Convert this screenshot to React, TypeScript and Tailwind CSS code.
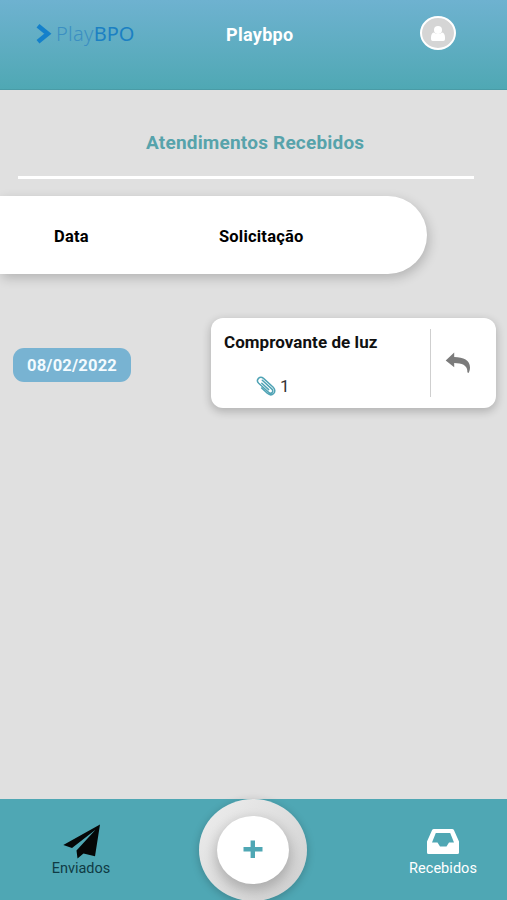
import type { ReactNode } from "react";

function Label({ children, className }: { children: ReactNode; className: string }) {
  return <span className={`block whitespace-nowrap ${className}`}>{children}</span>;
}

function Header() {
  return (
    <header className="flex h-[90px] shrink-0 items-start border-b border-[#4a9ba6] bg-linear-to-b from-[#6eb2d0] to-[#4fa8b4]">
      <div className="ml-9 mt-5 flex h-7 w-[190px] items-center">
        <svg className="mt-[-1px] h-5 w-4" viewBox="0 0 16 20" fill="none">
          <path d="M2 1.8L11.8 9.8 2 17.8" stroke="#1480cb" strokeWidth="4.6" />
        </svg>
        <span className="ml-1 whitespace-nowrap font-['Noto_Sans',sans-serif] text-[20px] leading-7 text-[#1b80c3]">
          <span className="font-light tracking-[0.3px] text-[#3b8fc2]">Play</span>
          <span className="tracking-[-0.1px]">BPO</span>
        </span>
      </div>
      <Label className="mt-[21px] w-[194px] text-[18px] font-bold leading-7 tracking-[0.3px] text-white">Playbpo</Label>
      <div className="mt-4 flex h-[34px] w-9 items-center justify-center rounded-[50%] border-2 border-white bg-[#d5d5d5]">
        <svg className="h-[15px] w-[14px]" viewBox="0 0 14 15" preserveAspectRatio="none" fill="#fff">
          <ellipse cx="7" cy="4" rx="4" ry="3.9" />
          <path d="M2.8 6.4Q7 9.4 11.2 6.4Q14 7.2 14 11.5V13.3Q14 15 12.3 15H1.7Q0 15 0 13.3V11.5Q0 7.2 2.8 6.4Z" />
        </svg>
      </div>
    </header>
  );
}

function RequestCard() {
  return (
    <article className="flex h-[90px] w-[285px] rounded-[12px] bg-white shadow-[0_3px_9px_1px_rgba(0,0,0,0.2)]">
      <div className="w-[219px] pl-[13px] pt-3">
        <Label className="text-[17px] font-bold leading-6 tracking-[0.06px] text-[#111]">Comprovante de luz</Label>
        <div className="ml-8 mt-5 flex items-center">
          <svg className="-mt-px h-5 w-5" viewBox="0 0 20 20" fill="none" stroke="#4fa3b5" strokeWidth="1.5" strokeLinecap="round">
            <path d="M6 4.2L15.4 12.8C18 15.4 15 18.6 12.3 16.2L2.4 7.2C-1 3.8 3.6 -0.9 7.2 2.3L16.9 11.2C21.4 15.7 15.6 21.3 11 17.2L5.3 11.9" transform="translate(.3 .1)" />
            <path d="M5.8 7.3L12.7 13.6" />
          </svg>
          <span className="ml-1 text-[17px] leading-6 text-[#333]">1</span>
        </div>
      </div>
      <div className="mt-[11px] h-[68px] w-px bg-[#cfcfcf]" />
      <svg className="ml-[14px] mt-[34px] h-[22px] w-[26px]" viewBox="0 0 26 22" preserveAspectRatio="none">
        <path d="M0.7 8.5L9.2 0.6V5C18.5 5.2 25 8.2 25 15.5C25 18.1 24.2 19.9 23.5 21C22.5 21 22.2 20 22.3 18.5C22 13.4 17 11.1 9.2 11V15.3Z" fill="#7b7b7b" />
      </svg>
    </article>
  );
}

function BottomNav() {
  return (
    <nav className="flex h-[101px] shrink-0 bg-[#4fa7b4]">
      <button className="ml-[31px] flex h-full w-[100px] flex-col items-center pt-[25px] text-[#103b45]">
        <svg className="h-[35px] w-[37px]" viewBox="0 0 37 35" preserveAspectRatio="none">
          <path d="M37 0.5L32 32.2 20.5 29.5 14.5 34.5 13.5 26.5 32.5 5.8 9 24 0.3 21Z" fill="#050707" />
        </svg>
        <Label className="text-[14.5px] leading-5">Enviados</Label>
      </button>
      <div className="ml-[68px] flex h-[102px] w-[108px] items-center justify-center rounded-[50%] bg-linear-to-br from-[#eeeeee] to-[#cecece] shadow-[0_2px_8px_rgba(0,0,0,0.22)]">
        <button className="flex h-[68px] w-[72px] items-center justify-center rounded-[50%] bg-white shadow-[0_5px_12px_2px_rgba(0,0,0,0.2)]">
          <svg className="-mt-px h-[19px] w-5" viewBox="0 0 20 19" preserveAspectRatio="none">
            <path d="M9.8 0.5V18M0.5 9.3H19.5" fill="none" stroke="#4fa7b4" strokeWidth="4.4" />
          </svg>
        </button>
      </div>
      <button className="ml-[86px] flex h-full w-[100px] flex-col items-center pt-[30px] text-white">
        <svg className="h-[25px] w-8" viewBox="0 0 32 25" preserveAspectRatio="none">
          <path fillRule="evenodd" d="M7 0H25Q26.5 0 27 1.2L32 12.5V23.5Q32 25 30.5 25H1.5Q0 25 0 23.5V12.5L5 1.2Q5.5 0 7 0ZM8.8 4L5 13.5H10.5L13 17.5H19.5L22 13.5H27L23.2 4Z" fill="currentColor" />
        </svg>
        <Label className="mt-[5px] text-[14.5px] leading-5 tracking-[0.05px]">Recebidos</Label>
      </button>
    </nav>
  );
}

export default function App() {
  return (
    <div className="flex h-[900px] w-[507px] flex-col overflow-hidden bg-[#e0e0e0] font-['Roboto',sans-serif]">
      <Header />
      <main className="flex-1">
        <h1 className="ml-[146px] mt-[41px] whitespace-nowrap text-[19px] font-bold leading-6 tracking-[0.2px] text-[#57a3ab]">
          Atendimentos Recebidos
        </h1>
        <div className="ml-[18px] mt-[21px] h-[3px] w-[456px] bg-white" />
        <div className="mt-[17px] flex h-[78px] w-[427px] items-center rounded-r-[39px] bg-white pl-[54px] pt-[3px] text-[16.5px] font-bold leading-6 tracking-[0.2px] text-black shadow-[2px_4px_12px_rgba(0,0,0,0.2)]">
          <Label className="w-[165px]">Data</Label>
          <Label className="">Solicitação</Label>
        </div>
        <div className="mt-[44px] flex items-center">
          <div className="ml-[13px] mr-20 mt-[3px] flex h-[34px] w-[118px] items-center justify-center rounded-[11px] bg-[#78b3d2] pt-[3px] text-[16.5px] font-bold tracking-[0.2px] text-[#f3fbff]">
            08/02/2022
          </div>
          <RequestCard />
        </div>
      </main>
      <BottomNav />
    </div>
  );
}
